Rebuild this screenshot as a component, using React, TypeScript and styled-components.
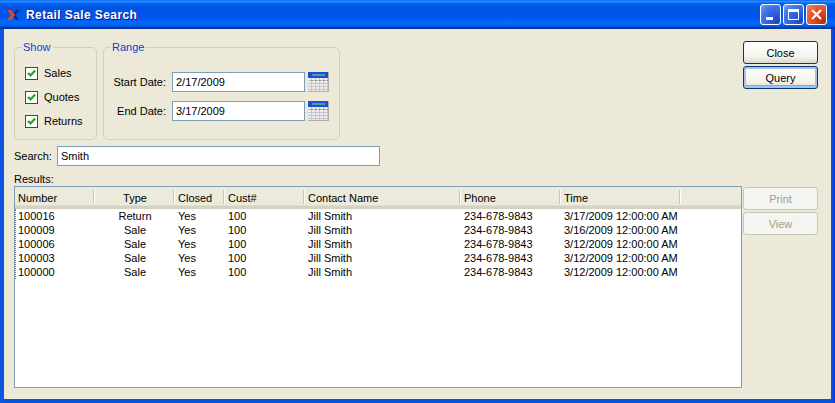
import { createGlobalStyle, styled } from 'styled-components';

const FONT = '"Liberation Sans", Arial, sans-serif';
const COLUMNS = '80px 80px 50px 80px 156px 100px 120px 1fr';

const rows = [
  ['100016', 'Return', 'Yes', '100', 'Jill Smith', '234-678-9843', '3/17/2009 12:00:00 AM'],
  ['100009', 'Sale', 'Yes', '100', 'Jill Smith', '234-678-9843', '3/16/2009 12:00:00 AM'],
  ['100006', 'Sale', 'Yes', '100', 'Jill Smith', '234-678-9843', '3/12/2009 12:00:00 AM'],
  ['100003', 'Sale', 'Yes', '100', 'Jill Smith', '234-678-9843', '3/12/2009 12:00:00 AM'],
  ['100000', 'Sale', 'Yes', '100', 'Jill Smith', '234-678-9843', '3/12/2009 12:00:00 AM'],
];

const headers = ['Number', 'Type', 'Closed', 'Cust#', 'Contact Name', 'Phone', 'Time', ''];

const GlobalStyle = createGlobalStyle`
  html, body {
    margin: 0;
    padding: 0;
    background: #fff;
  }
  body {
    font-family: ${FONT};
    font-size: 11px;
    color: #000;
  }
`;

const Window = styled.div`
  width: 835px;
  height: 403px;
  display: flex;
  flex-direction: column;
  overflow: hidden;
  background: linear-gradient(90deg, #0831d9 0, #166aee 1px, #0855dd 2px, #0855dd 832px, #0831d9 835px);
`;

const TitleBar = styled.div`
  height: 29px;
  flex: none;
  display: flex;
  align-items: center;
  padding: 0 8px 0 7px;
  background: linear-gradient(
    180deg,
    #0058ee 0%,
    #3593ff 4%,
    #288eff 6%,
    #127dff 8%,
    #036ffc 10%,
    #0262ee 14%,
    #0057e5 20%,
    #0054e3 24%,
    #0055eb 56%,
    #005bf5 66%,
    #026afe 76%,
    #0062ef 86%,
    #0052d6 92%,
    #0040ab 94%,
    #003092 100%
  );
`;

const TitleText = styled.div`
  flex: 1;
  margin-left: 7px;
  color: #fff;
  font-size: 12px;
  font-weight: 700;
  letter-spacing: 0.4px;
  text-shadow: 1px 1px 0 #0f1089;
`;

const TitleButtons = styled.div`
  display: flex;
  gap: 2px;
  margin-top: -1px;
`;

const TitleButton = styled.div<{ $danger?: boolean }>`
  width: 21px;
  height: 21px;
  box-sizing: border-box;
  display: flex;
  align-items: center;
  justify-content: center;
  border: 1px solid #fff;
  border-radius: 3px;
  background: ${(p) =>
    p.$danger
      ? 'radial-gradient(circle at 85% 85%, #b8300d 0, #e5623c 70%, #ec8a6a 100%)'
      : 'radial-gradient(circle at 85% 85%, #1c46c8 0, #3f72ea 65%, #7ea3f2 100%)'};
`;

const Body = styled.div`
  flex: 1;
  margin: 0 4px 4px;
  padding: 12px 13px 11px 10px;
  display: flex;
  flex-direction: column;
  background: #ece9d8;
  min-height: 0;
`;

const TopRow = styled.div`
  display: flex;
  justify-content: space-between;
  height: 99px;
`;

const Groups = styled.div`
  display: flex;
  gap: 6px;
`;

const Group = styled.fieldset<{ $width: number }>`
  width: ${(p) => p.$width}px;
  height: 99px;
  box-sizing: border-box;
  margin: 0;
  padding: 0;
  border: 1px solid #d0d0bf;
  border-radius: 5px;
`;

const GroupTitle = styled.legend`
  margin-left: 7px;
  padding: 0 2px 0 1px;
  color: #0046d5;
  font-size: 11px;
  line-height: 13px;
`;

const CheckList = styled.div`
  display: flex;
  flex-direction: column;
  gap: 10px;
  padding: 12px 0 0 10px;
`;

const CheckRow = styled.div`
  display: flex;
  align-items: center;
  gap: 6px;
  height: 14px;
`;

const CheckBox = styled.div`
  width: 13px;
  height: 13px;
  box-sizing: border-box;
  display: flex;
  align-items: center;
  justify-content: center;
  background: #fff;
  border: 1px solid #1c5180;
`;

const DateList = styled.div`
  display: flex;
  flex-direction: column;
  gap: 9px;
  padding: 18px 0 0 9px;
`;

const DateRow = styled.div`
  display: flex;
  align-items: center;
`;

const DateLabel = styled.div`
  width: 53px;
  margin-right: 6px;
  text-align: right;
  white-space: nowrap;
`;

const TextField = styled.div<{ $width: number }>`
  width: ${(p) => p.$width}px;
  height: 20px;
  box-sizing: border-box;
  display: flex;
  align-items: center;
  padding-left: 3px;
  background: #fff;
  border: 1px solid #7f9db9;
`;

const CalendarIcon = styled.svg`
  margin-left: 3px;
  flex: none;
`;

const ButtonColumn = styled.div`
  display: flex;
  flex-direction: column;
  gap: 2px;
`;

const Button = styled.div<{ $focused?: boolean; $disabled?: boolean }>`
  width: 75px;
  height: 23px;
  box-sizing: border-box;
  display: flex;
  align-items: center;
  justify-content: center;
  border-radius: 3px;
  border: 1px solid ${(p) => (p.$disabled ? '#c9c7ba' : '#003c74')};
  color: ${(p) => (p.$disabled ? '#a1a192' : '#000')};
  background: ${(p) =>
    p.$disabled ? '#f4f4f0' : 'linear-gradient(180deg, #fff 0%, #f3f3ee 70%, #dcd8ce 100%)'};
  box-shadow: ${(p) =>
    p.$focused ? 'inset 0 0 0 2px #a9c1ea, inset 0 -1px 0 2px #8aa6dc' : 'none'};
`;

const SearchRow = styled.div`
  display: flex;
  align-items: center;
  gap: 5px;
  margin-top: 6px;
`;

const ResultsLabel = styled.div`
  margin-top: 7px;
  height: 13px;
  line-height: 13px;
`;

const ResultsRow = styled.div`
  flex: 1;
  display: flex;
  gap: 1px;
  min-height: 0;
`;

const Table = styled.div`
  flex: 1;
  box-sizing: border-box;
  background: #fff;
  border: 1px solid #7f9db9;
  min-width: 0;
`;

const HeaderRow = styled.div`
  height: 22px;
  box-sizing: border-box;
  display: grid;
  grid-template-columns: ${COLUMNS};
  background: #ebeadb;
  border-bottom: 3px solid #d6d2c2;
  box-shadow: inset 0 -1px 0 #e2decd;
`;

const HeaderCell = styled.div<{ $center?: boolean }>`
  position: relative;
  display: flex;
  align-items: center;
  justify-content: ${(p) => (p.$center ? 'center' : 'flex-start')};
  padding: 2px 0 0 ${(p) => (p.$center ? 0 : 3)}px;
  &::after {
    content: '';
    position: absolute;
    right: 1px;
    top: 3px;
    bottom: 2px;
    width: 1px;
    background: #c7c5b2;
    box-shadow: 1px 0 0 #fff;
  }
  &:last-child::after {
    display: none;
  }
`;

const RowList = styled.div`
  position: relative;
  &::before {
    content: '';
    position: absolute;
    left: 0;
    top: 0;
    bottom: 0;
    border-left: 1px dotted #7a7a7a;
  }
`;

const DataRow = styled.div`
  height: 14px;
  display: grid;
  grid-template-columns: ${COLUMNS};
  align-items: center;
`;

const DataCell = styled.div<{ $center?: boolean }>`
  padding-left: ${(p) => (p.$center ? 0 : 3)}px;
  text-align: ${(p) => (p.$center ? 'center' : 'left')};
  white-space: nowrap;
`;

const SideButtons = styled(ButtonColumn)`
  margin-top: 1px;
`;

function Calendar() {
  const cols = [1, 5, 9, 13, 17];
  const lines = [8, 11, 14, 17];
  return (
    <CalendarIcon width="21" height="20" viewBox="0 0 21 20">
      <rect x="0" y="0" width="21" height="6" fill="#1a50d0" />
      <rect x="4" y="2" width="13" height="2" fill="#4f9aa8" />
      <rect x="0" y="6" width="21" height="14" fill="#ededed" />
      {lines.map((y) => (
        <rect key={y} x="0" y={y} width="21" height="1" fill="#c4c4c4" />
      ))}
      {cols.map((x) => (
        <rect key={x} x={x + 2} y="6" width="1" height="14" fill="#c8c8c8" />
      ))}
      {cols.map((x) => (
        <rect key={x} x={x + 2} y="8" width="2" height="1" fill="#8a8a8a" />
      ))}
      <rect x="0" y="19" width="21" height="1" fill="#b0b0b0" />
      <rect x="20" y="0" width="1" height="20" fill="#b0b0b0" />
    </CalendarIcon>
  );
}

function Check({ label }: { label: string }) {
  return (
    <CheckRow>
      <CheckBox>
        <svg width="9" height="9" viewBox="0 0 9 9">
          <path d="M1 4 L3.5 6.5 L8 1.5" fill="none" stroke="#21a121" strokeWidth="2.2" />
        </svg>
      </CheckBox>
      {label}
    </CheckRow>
  );
}

export default function App() {
  return (
    <>
      <GlobalStyle />
      <Window>
        <TitleBar>
          <svg width="12" height="10" viewBox="0 0 12 10">
            <path d="M0 0 H4 L8 5 L4 10 H0 L4 5 Z" fill="#e8461c" />
            <path d="M12 0 H9 L6.8 3 L8.4 5 L6.8 7 L9 10 H12 L8.5 5 Z" fill="#0c2a78" />
          </svg>
          <TitleText>Retail Sale Search</TitleText>
          <TitleButtons>
            <TitleButton>
              <svg width="13" height="13" viewBox="0 0 13 13">
                <rect x="2" y="9" width="7" height="3" fill="#fff" />
              </svg>
            </TitleButton>
            <TitleButton>
              <svg width="13" height="13" viewBox="0 0 13 13">
                <path d="M1.5 1.5 H11.5 V11.5 H1.5 Z" fill="none" stroke="#fff" />
                <rect x="1" y="1" width="11" height="3" fill="#fff" />
              </svg>
            </TitleButton>
            <TitleButton $danger>
              <svg width="13" height="13" viewBox="0 0 13 13">
                <path d="M2 2 L11 11 M11 2 L2 11" stroke="#fff" strokeWidth="2.2" />
              </svg>
            </TitleButton>
          </TitleButtons>
        </TitleBar>
        <Body>
          <TopRow>
            <Groups>
              <Group $width={83}>
                <GroupTitle>Show</GroupTitle>
                <CheckList>
                  <Check label="Sales" />
                  <Check label="Quotes" />
                  <Check label="Returns" />
                </CheckList>
              </Group>
              <Group $width={237}>
                <GroupTitle>Range</GroupTitle>
                <DateList>
                  <DateRow>
                    <DateLabel>Start Date:</DateLabel>
                    <TextField $width={133}>2/17/2009</TextField>
                    <Calendar />
                  </DateRow>
                  <DateRow>
                    <DateLabel>End Date:</DateLabel>
                    <TextField $width={133}>3/17/2009</TextField>
                    <Calendar />
                  </DateRow>
                </DateList>
              </Group>
            </Groups>
            <ButtonColumn>
              <Button>Close</Button>
              <Button $focused>Query</Button>
            </ButtonColumn>
          </TopRow>
          <SearchRow>
            Search:
            <TextField $width={323}>Smith</TextField>
          </SearchRow>
          <ResultsLabel>Results:</ResultsLabel>
          <ResultsRow>
            <Table>
              <HeaderRow>
                {headers.map((h, i) => (
                  <HeaderCell key={i} $center={i === 1}>
                    {h}
                  </HeaderCell>
                ))}
              </HeaderRow>
              <RowList>
                {rows.map((row) => (
                  <DataRow key={row[0]}>
                    {row.map((cell, i) => (
                      <DataCell key={i} $center={i === 1}>
                        {cell}
                      </DataCell>
                    ))}
                  </DataRow>
                ))}
              </RowList>
            </Table>
            <SideButtons>
              <Button $disabled>Print</Button>
              <Button $disabled>View</Button>
            </SideButtons>
          </ResultsRow>
        </Body>
      </Window>
    </>
  );
}
